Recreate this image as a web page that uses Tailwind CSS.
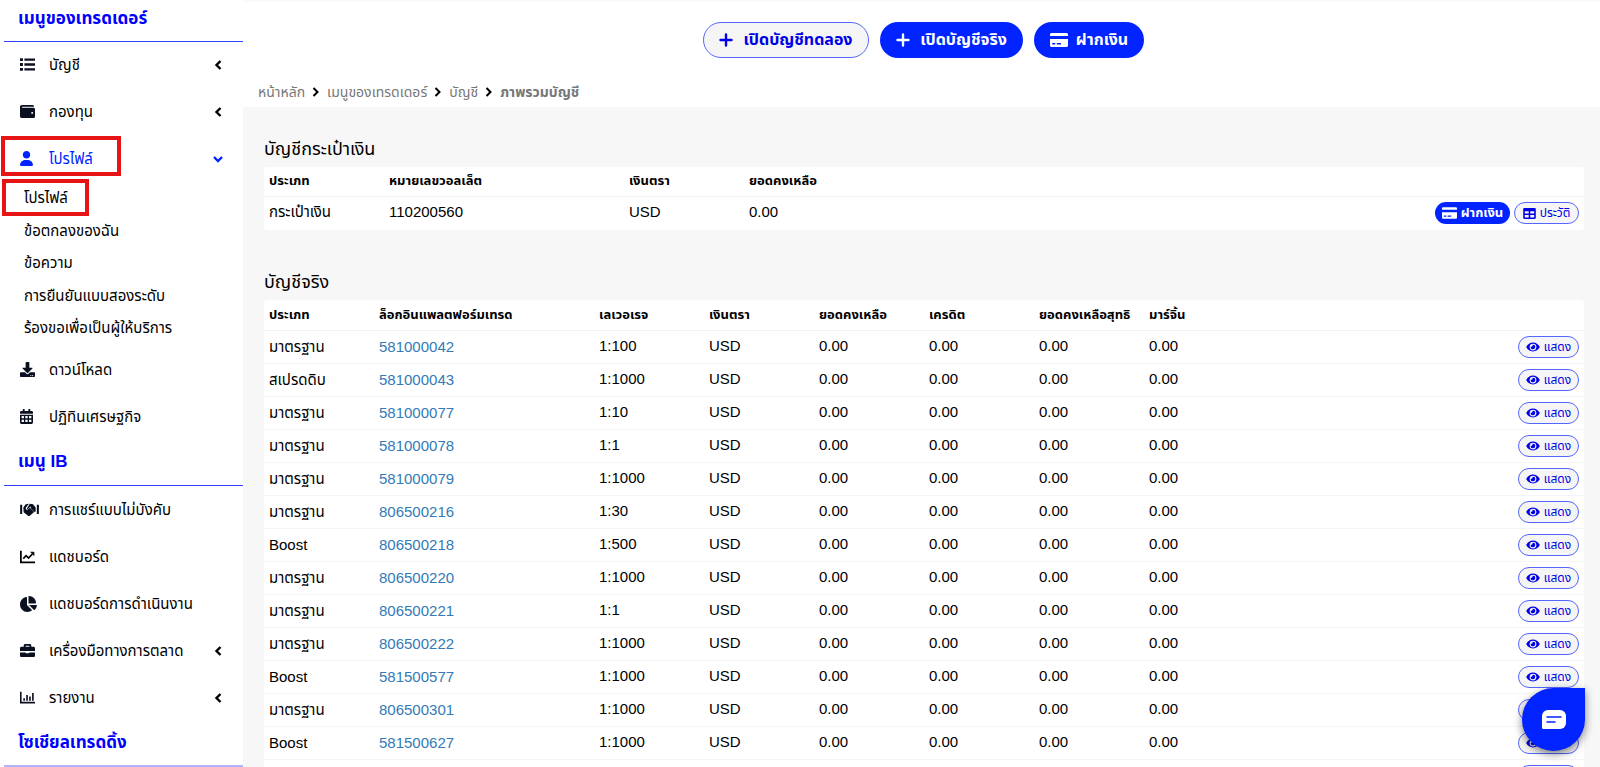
<!DOCTYPE html>
<html lang="th">

<head>
    <meta charset="UTF-8" />
    <meta name="viewport" content="width=device-width, initial-scale=1.0" />
    <title>ภาพรวมบัญชี</title>
    <script src="https://cdn.jsdelivr.net/npm/@tailwindcss/browser@4"></script>
</head>

<body class="h-screen overflow-hidden bg-white text-black text-[15px] leading-5 font-['Liberation_Sans','Noto_Sans_Thai',sans-serif]">

    <!-- Icons -->
    <svg class="hidden">
        <symbol id="i-list" viewBox="0 0 512 512"><path d="M0 40h100v100H0zM0 206h100v100H0zM0 372h100v100H0zM150 50h362v80H150zM150 216h362v80H150zM150 382h362v80H150z" /></symbol>
        <symbol id="i-wallet" viewBox="0 0 512 512"><path d="M461.2 128H80c-8.84 0-16-7.16-16-16s7.16-16 16-16h384c8.84 0 16-7.16 16-16 0-26.51-21.49-48-48-48H64C28.65 32 0 60.65 0 96v320c0 35.35 28.65 64 64 64h397.2c28.02 0 50.8-21.53 50.8-48V176c0-26.47-22.78-48-50.8-48zM416 336c-17.67 0-32-14.33-32-32s14.33-32 32-32 32 14.33 32 32-14.33 32-32 32z" /></symbol>
        <symbol id="i-user" viewBox="0 0 448 512"><path d="M224 256c70.7 0 128-57.3 128-128S294.7 0 224 0 96 57.3 96 128s57.3 128 128 128zM178 304C80 304 0 384 0 482c0 17 13 30 30 30h388c17 0 30-13 30-30 0-98-80-178-178-178z" /></symbol>
        <symbol id="i-download" viewBox="0 0 512 512"><path d="M216 0h80c13.3 0 24 10.7 24 24v168h87.7c17.8 0 26.7 21.5 14.1 34.1L269.7 378.3c-7.5 7.5-19.8 7.5-27.3 0L90.1 226.1c-12.6-12.6-3.7-34.1 14.1-34.1H192V24c0-13.3 10.7-24 24-24zm296 376v112c0 13.3-10.7 24-24 24H24c-13.3 0-24-10.7-24-24V376c0-13.3 10.7-24 24-24h146.7l49 49c20.1 20.1 52.5 20.1 72.6 0l49-49H488c13.3 0 24 10.7 24 24zm-124 88c0-11-9-20-20-20s-20 9-20 20 9 20 20 20 20-9 20-20zm64 0c0-11-9-20-20-20s-20 9-20 20 9 20 20 20 20-9 20-20z" /></symbol>
        <symbol id="i-calendar" viewBox="0 0 448 512"><path fill-rule="evenodd" d="M96 0h64v64h128V0h64v64h48c26 0 48 22 48 48v48H0v-48c0-26 22-48 48-48h48zM0 192h448v272c0 26-22 48-48 48H48c-26 0-48-22-48-48zM56 240v72h80v-72zM184 240v72h80v-72zM312 240v72h80v-72zM56 368v80h80v-80zM184 368v80h80v-80zM312 368v80h80v-80z" /></symbol>
        <symbol id="i-handshake" viewBox="0 0 640 512"><path d="M0 90h70v320H0zM570 90h70v320h-70z" /><path d="M110 190l80-110 110-20-100 130c-14 22-10 48 10 62 20 14 46 12 62-6l56-52 130 120c14 14 14 32 2 44l-130 110c-18 14-44 14-62 0L120 350z" /><path d="M330 60l110 20 90 110v130l-40 20-140-140 26-26-20-22-96 86c-10 8-24 6-28-6-2-6 0-12 4-16z" /></symbol>
        <symbol id="i-chart-line" viewBox="0 0 512 512"><path fill="none" stroke="currentColor" stroke-width="60" d="M30 56v398h482M112 330l96-100 84 80 130-140" /><path d="M340 96h130c12 0 20 8 20 20v130z" /></symbol>
        <symbol id="i-chart-pie" viewBox="32 0 544 512"><path d="M304 240V16.6c0-9 7-16.6 16-16.6C443.7 0 544 100.3 544 224c0 9-7.6 16-16.6 16H304zM32 272C32 150.7 122.1 50.3 239 34.3c9.2-1.3 17 6.1 17 15.4V288L412.5 444.5c6.7 6.7 6.2 17.7-1.5 23.1C371.8 495.6 323.8 512 272 512C139.5 512 32 404.6 32 272zm526.4 16c9.3 0 16.6 7.8 15.4 17c-7.7 55.9-34.6 105.6-73.9 142.3c-6 5.6-15.4 5.2-21.2-.7L320 288H558.4z" /></symbol>
        <symbol id="i-briefcase" viewBox="0 0 512 512"><path d="M320 336c0 8.84-7.16 16-16 16h-96c-8.84 0-16-7.16-16-16v-16H0v112c0 25.600 22.400 48 48 48h416c25.600 0 48-22.400 48-48V320H320zm144-208h-80V80c0-25.600-22.400-48-48-48H176c-25.600 0-48 22.400-48 48v48H48c-25.600 0-48 22.400-48 48v96h512v-96c0-25.600-22.400-48-48-48zm-144 0H192V96h128z" /></symbol>
        <symbol id="i-chart-bar" viewBox="0 0 512 512"><path d="M0 56h54v348h458v54H0zM112 280h56v86h-56zM212 170h56v196h-56zM312 220h56v146h-56zM412 100h56v266h-56z" /></symbol>
        <symbol id="i-left" viewBox="0 0 10 12"><path fill="none" stroke="currentColor" stroke-width="2.400" d="M7.500 2L3.500 6l4 4" /></symbol>
        <symbol id="i-right" viewBox="0 0 10 12"><path fill="none" stroke="currentColor" stroke-width="2" d="M2.500 2l4 4-4 4" /></symbol>
        <symbol id="i-down" viewBox="0 0 12 12"><path fill="none" stroke="currentColor" stroke-width="2.400" d="M2 4l4 4 4-4" /></symbol>
        <symbol id="i-plus" viewBox="0 0 14 14"><path fill="none" stroke="currentColor" stroke-width="2.400" stroke-linecap="round" d="M7 1.500v11M1.500 7h11" /></symbol>
        <symbol id="i-card" viewBox="0 0 576 448"><path fill-rule="evenodd" d="M48 0h480c27 0 48 21 48 48v48H0V48C0 21 21 0 48 0zM0 192h576v208c0 27-21 48-48 48H48c-27 0-48-21-48-48zM72 320v48h96v-48zM216 320v48h136v-48z" /></symbol>
        <symbol id="i-table" viewBox="0 0 512 448"><path fill-rule="evenodd" d="M48 0h416c27 0 48 21 48 48v352c0 27-21 48-48 48H48c-27 0-48-21-48-48V48C0 21 21 0 48 0zM64 128v96h160v-96zM288 128v96h160v-96zM64 288v96h160v-96zM288 288v96h160v-96z" /></symbol>
        <symbol id="i-eye" viewBox="0 0 576 512"><path d="M572.52 241.4C518.29 135.59 410.93 64 288 64S57.68 135.64 3.48 241.41a32.35 32.35 0 0 0 0 29.19C57.71 376.41 165.07 448 288 448s230.32-71.64 284.52-177.41a32.35 32.35 0 0 0 0-29.19zM288 400a144 144 0 1 1 144-144 143.93 143.93 0 0 1-144 144zm0-240a95.31 95.31 0 0 0-25.31 3.79 47.85 47.85 0 0 1-66.9 66.9A95.78 95.78 0 1 0 288 160z" /></symbol>
    </svg>

    <div class="flex h-full">

        <!-- Sidebar -->
        <nav class="w-[243px] shrink-0 overflow-hidden pl-1">
            <h2 class="h-[42px] pl-3.5 pt-[9px] text-[17px] font-bold text-[#0000ff] border-b border-[#3344ff]">เมนูของเทรดเดอร์</h2>
            <div class="-mt-px">
                <a href="#" class="flex items-center h-[47px] pl-4 pr-5">
                    <svg class="w-[15px] h-[15px] mr-3.5 fill-[#0b1020]"><use href="#i-list" /></svg>บัญชี
                    <svg class="w-2.5 h-3 ml-auto"><use href="#i-left" /></svg>
                </a>
                <a href="#" class="flex items-center h-[47px] pl-4 pr-5">
                    <svg class="w-[15px] h-[15px] mr-3.5 fill-[#0b1020]"><use href="#i-wallet" /></svg>กองทุน
                    <svg class="w-2.5 h-3 ml-auto"><use href="#i-left" /></svg>
                </a>
                <a href="#" class="relative flex items-center h-[47px] pl-4 pr-[19px] text-[#0023ff]">
                    <span class="absolute -left-[3px] top-px w-[120px] h-10 border-4 border-[#e61414]"></span>
                    <svg class="w-[13px] h-[15px] mr-4 fill-current"><use href="#i-user" /></svg>โปรไฟล์
                    <svg class="w-3 h-3 ml-auto"><use href="#i-down" /></svg>
                </a>
                <div class="pl-5 pb-0.5">
                    <a href="#" class="relative flex items-center h-8">
                        <span class="absolute -left-[22px] -top-[3px] w-[87px] h-[37px] border-4 border-[#e61414]"></span>โปรไฟล์
                    </a>
                    <a href="#" class="flex items-center h-[33px]">ข้อตกลงของฉัน</a>
                    <a href="#" class="flex items-center h-8">ข้อความ</a>
                    <a href="#" class="flex items-center h-[33px]">การยืนยันแบบสองระดับ</a>
                    <a href="#" class="flex items-center h-8">ร้องขอเพื่อเป็นผู้ให้บริการ</a>
                </div>
                <a href="#" class="flex items-center h-[47px] pl-4 pr-5">
                    <svg class="w-[15px] h-[15px] mr-3.5 fill-[#0b1020]"><use href="#i-download" /></svg>ดาวน์โหลด
                </a>
                <a href="#" class="flex items-center h-[47px] pl-4 pr-5">
                    <svg class="w-[13px] h-[15px] mr-4 fill-[#0b1020]"><use href="#i-calendar" /></svg>ปฏิทินเศรษฐกิจ
                </a>
            </div>
            <h2 class="h-[46px] pl-3.5 pt-3 text-[17px] font-bold text-[#0000ff] border-b border-[#3344ff]">เมนู IB</h2>
            <div>
                <a href="#" class="flex items-center h-[47px] pl-4 pr-5">
                    <svg class="w-[19px] h-[15px] mr-2.5 fill-[#0b1020]"><use href="#i-handshake" /></svg>การแชร์แบบไม่บังคับ
                </a>
                <a href="#" class="flex items-center h-[47px] pl-4 pr-5">
                    <svg class="w-[15px] h-[15px] mr-3.5 fill-[#0b1020]"><use href="#i-chart-line" /></svg>แดชบอร์ด
                </a>
                <a href="#" class="flex items-center h-[47px] pl-4 pr-5">
                    <svg class="w-[17px] h-4 mr-3 fill-[#0b1020]"><use href="#i-chart-pie" /></svg>แดชบอร์ดการดำเนินงาน
                </a>
                <a href="#" class="flex items-center h-[47px] pl-4 pr-5">
                    <svg class="w-[15px] h-[15px] mr-3.5 fill-[#0b1020]"><use href="#i-briefcase" /></svg>เครื่องมือทางการตลาด
                    <svg class="w-2.5 h-3 ml-auto"><use href="#i-left" /></svg>
                </a>
                <a href="#" class="flex items-center h-[47px] pl-4 pr-5">
                    <svg class="w-[15px] h-[15px] mr-3.5 fill-[#0b1020]"><use href="#i-chart-bar" /></svg>รายงาน
                    <svg class="w-2.5 h-3 ml-auto"><use href="#i-left" /></svg>
                </a>
            </div>
            <h2 class="h-[46px] pl-3.5 pt-3 text-[17px] font-bold text-[#0000ff] border-b-2 border-[#b0b4ff]">โซเชียลเทรดดิ้ง</h2>
        </nav>

        <!-- Content -->
        <main class="flex-1 overflow-hidden bg-[#f7f7f7]">
            <header class="h-[107px] bg-white border-t-2 border-[#fafafa]">
                <div class="flex justify-center gap-[11px] pt-5 pl-1 text-base font-bold">
                    <button class="flex items-center justify-center gap-2.5 w-[166px] h-9 rounded-full border border-[#5566ff] bg-[#f5f5f5] text-[#0000e6]">
                        <svg class="w-3.5 h-3.5"><use href="#i-plus" /></svg>เปิดบัญชีทดลอง
                    </button>
                    <button class="flex items-center justify-center gap-2.5 w-[143px] h-9 rounded-full bg-[#0023ff] text-white">
                        <svg class="w-3.5 h-3.5"><use href="#i-plus" /></svg>เปิดบัญชีจริง
                    </button>
                    <button class="flex items-center justify-center gap-2 w-[110px] h-9 rounded-full bg-[#0023ff] text-white">
                        <svg class="w-[18px] h-3.5 fill-current"><use href="#i-card" /></svg>ฝากเงิน
                    </button>
                </div>
                <div class="flex items-center gap-1.5 pt-6 pl-[15px] text-[14px] text-[#777777]">
                    <a href="#">หน้าหลัก</a>
                    <svg class="w-2.5 h-3 text-black"><use href="#i-right" /></svg>
                    <a href="#">เมนูของเทรดเดอร์</a>
                    <svg class="w-2.5 h-3 text-black"><use href="#i-right" /></svg>
                    <a href="#">บัญชี</a>
                    <svg class="w-2.5 h-3 text-black"><use href="#i-right" /></svg>
                    <span class="font-bold">ภาพรวมบัญชี</span>
                </div>
            </header>

            <section class="pl-[21px] pr-4 pt-7">
                <h3 class="h-8 text-[18px] leading-7">บัญชีกระเป๋าเงิน</h3>
                <table class="w-full table-fixed bg-white rounded-sm text-left">
                    <colgroup>
                        <col class="w-1/11" /><col class="w-2/11" /><col class="w-1/11" /><col class="w-5/11" /><col class="w-2/11" />
                    </colgroup>
                    <thead>
                        <tr class="h-[29px] border-b border-[#f2f2f2] text-[13px]">
                            <th class="pl-[5px]">ประเภท</th>
                            <th class="pl-[5px]">หมายเลขวอลเล็ต</th>
                            <th class="pl-[5px]">เงินตรา</th>
                            <th class="pl-[5px]">ยอดคงเหลือ</th>
                            <th></th>
                        </tr>
                    </thead>
                    <tbody>
                        <tr class="h-[34px]">
                            <td class="pl-[5px] pb-0.5">กระเป๋าเงิน</td>
                            <td class="pl-[5px] pb-0.5">110200560</td>
                            <td class="pl-[5px] pb-0.5">USD</td>
                            <td class="pl-[5px] pb-0.5">0.00</td>
                            <td class="pr-[5px]">
                                <div class="flex justify-end gap-1 text-[12px]">
                                    <button class="flex items-center justify-center gap-1 w-[75px] h-[22px] rounded-full bg-[#0023ff] text-[13px] text-white font-bold">
                                        <svg class="w-[15px] h-3 fill-current"><use href="#i-card" /></svg>ฝากเงิน
                                    </button>
                                    <button class="flex items-center justify-center gap-1 w-[65px] h-[22px] rounded-full border border-[#5566ff] bg-[#f5f5f5] text-[#0000e6]">
                                        <svg class="w-[13px] h-[11px] fill-current"><use href="#i-table" /></svg>ประวัติ
                                    </button>
                                </div>
                            </td>
                        </tr>
                    </tbody>
                </table>

                <h3 class="mt-[38px] h-8 text-[18px] leading-7">บัญชีจริง</h3>
                <table class="w-full table-fixed bg-white rounded-sm text-left">
                    <colgroup>
                        <col class="w-1/12" /><col class="w-2/12" /><col class="w-1/12" /><col class="w-1/12" /><col class="w-1/12" />
                        <col class="w-1/12" /><col class="w-1/12" /><col class="w-2/12" /><col class="w-2/12" />
                    </colgroup>
                    <thead>
                        <tr class="h-[30px] border-b border-[#f2f2f2] text-[13px] whitespace-nowrap">
                            <th class="pl-[5px]">ประเภท</th>
                            <th class="pl-[5px]">ล็อกอินแพลตฟอร์มเทรด</th>
                            <th class="pl-[5px]">เลเวอเรจ</th>
                            <th class="pl-[5px]">เงินตรา</th>
                            <th class="pl-[5px]">ยอดคงเหลือ</th>
                            <th class="pl-[5px]">เครดิต</th>
                            <th class="pl-[5px]">ยอดคงเหลือสุทธิ</th>
                            <th class="pl-[5px]">มาร์จิ้น</th>
                            <th></th>
                        </tr>
                    </thead>
                    <tbody id="accounts"></tbody>
                </table>
            </section>
        </main>
    </div>

    <!-- Chat -->
    <button aria-label="แชท" class="fixed right-[15px] bottom-4 flex items-center justify-center w-[63px] h-[63px] rounded-full rounded-tr-lg bg-[#0023ff] shadow-[0_3px_8px_rgba(0,0,0,0.5)]">
        <svg class="w-6 h-5" viewBox="0 0 24 20">
            <path fill="#fff" d="M6 0h12a6 6 0 0 1 6 6v7a6 6 0 0 1-6 6H1.500A1.500 1.500 0 0 1 0 17.500V6a6 6 0 0 1 6-6z" />
            <path stroke="#0023ff" stroke-width="1.500" stroke-linecap="round" d="M5 7h14M5 12h8" />
        </svg>
    </button>

    <script>
        const accounts = [
            ['มาตรฐาน', '581000042', '1:100'],
            ['สเปรดดิบ', '581000043', '1:1000'],
            ['มาตรฐาน', '581000077', '1:10'],
            ['มาตรฐาน', '581000078', '1:1'],
            ['มาตรฐาน', '581000079', '1:1000'],
            ['มาตรฐาน', '806500216', '1:30'],
            ['Boost', '806500218', '1:500'],
            ['มาตรฐาน', '806500220', '1:1000'],
            ['มาตรฐาน', '806500221', '1:1'],
            ['มาตรฐาน', '806500222', '1:1000'],
            ['Boost', '581500577', '1:1000'],
            ['มาตรฐาน', '806500301', '1:1000'],
            ['Boost', '581500627', '1:1000'],
            ['มาตรฐาน', '581500628', '1:1000'],
        ];

        document.getElementById('accounts').innerHTML = accounts.map(([type, login, leverage]) => `
            <tr class="h-[33px] border-b border-[#f5f5f5]">
                <td class="pl-[5px]">${type}</td>
                <td class="pl-[5px]"><a href="#" class="text-[#337ab7]">${login}</a></td>
                <td class="pl-[5px] pb-px">${leverage}</td>
                <td class="pl-[5px] pb-px">USD</td>
                <td class="pl-[5px] pb-px">0.00</td>
                <td class="pl-[5px] pb-px">0.00</td>
                <td class="pl-[5px] pb-px">0.00</td>
                <td class="pl-[5px] pb-px">0.00</td>
                <td class="pr-[5px]">
                    <button class="flex items-center justify-center gap-1 w-[61px] h-[22px] ml-auto rounded-full border border-[#5566ff] bg-[#f5f5f5] text-[12px] text-[#0000e6]">
                        <svg class="w-3.5 h-3 fill-current"><use href="#i-eye" /></svg>แสดง
                    </button>
                </td>
            </tr>`).join('');
    </script>
</body>

</html>
